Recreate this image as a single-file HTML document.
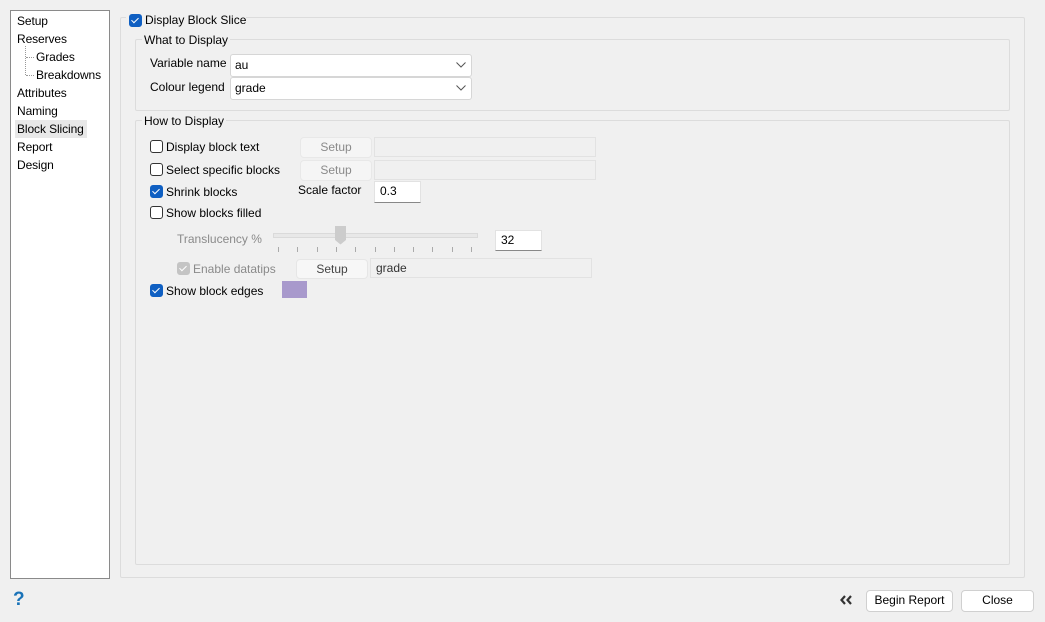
<!DOCTYPE html>
<html><head><style>
*{box-sizing:border-box;margin:0;padding:0}
body{width:1045px;height:622px;background:#f0f0f0;font-family:"Liberation Sans",sans-serif;font-size:12px;color:#000;position:relative;overflow:hidden}
.a{position:absolute;white-space:nowrap}
.grp{position:absolute;border:1px solid #dcdcdc;border-radius:2px}
.lbl{position:absolute;background:#f0f0f0;padding:0 2px;line-height:14px}
.cb{position:absolute;width:13px;height:13px;border:1px solid #333;border-radius:3px;background:#fff}
.cb.on{background:#0f5fc2;border-color:#0f5fc2}
.cb.on:after{content:"";position:absolute;left:3px;top:1px;width:3px;height:6px;border:solid #fff;border-width:0 1.3px 1.3px 0;transform:rotate(45deg)}
.btn{position:absolute;border:1px solid #d0d0d0;border-radius:4px;background:#fff;text-align:center;line-height:19px}
.btn.dis{background:#f5f5f5;border-color:#e8e8e8;color:#8a8a8a}
.fld{position:absolute;border:1px solid #e2e2e2;background:#f0f0f0}
.inp{position:absolute;background:#fff;border:1px solid #e2e2e2;border-bottom:1px solid #888;padding-left:5px;line-height:19px}
.combo{position:absolute;background:#fff;border:1px solid #d6d6d6;border-radius:3px;padding-left:4px;line-height:20px}
.combo svg{position:absolute;right:5px;top:7px}
</style></head><body>
<div class="a" style="left:10px;top:10px;width:100px;height:569px;background:#fff;border:1px solid #8a8a8a"></div>
<div class="a" style="left:15px;top:120px;width:72px;height:18px;background:#e8e8e8"></div>
<div class="a" style="left:17px;top:12px;line-height:18px;letter-spacing:-0.1px">Setup<br>Reserves<br><span style="padding-left:19px">Grades</span><br><span style="padding-left:19px">Breakdowns</span><br>Attributes<br>Naming<br>Block Slicing<br>Report<br>Design</div>
<div class="a" style="left:25px;top:46px;width:1px;height:29px;border-left:1px dotted #999"></div>
<div class="a" style="left:26px;top:57px;width:8px;border-top:1px dotted #999"></div>
<div class="a" style="left:26px;top:75px;width:8px;border-top:1px dotted #999"></div>

<div class="grp" style="left:120px;top:17px;width:905px;height:561px"></div>
<div class="lbl" style="left:126px;top:13px;width:120px;height:14px"></div>
<div class="cb on" style="left:129px;top:14px"></div>
<div class="a" style="left:145px;top:13px;line-height:14px">Display Block Slice</div>

<div class="grp" style="left:135px;top:39px;width:875px;height:72px"></div>
<div class="lbl" style="left:142px;top:33px">What to Display</div>
<div class="a" style="left:150px;top:56px">Variable name</div>
<div class="combo" style="left:230px;top:54px;width:242px;height:23px">au<svg width="10" height="6"><path d="M0.5 0.5L5 5L9.5 0.5" fill="none" stroke="#555"/></svg></div>
<div class="a" style="left:150px;top:80px">Colour legend</div>
<div class="combo" style="left:230px;top:77px;width:242px;height:23px">grade<svg width="10" height="6"><path d="M0.5 0.5L5 5L9.5 0.5" fill="none" stroke="#555"/></svg></div>

<div class="grp" style="left:135px;top:120px;width:875px;height:445px"></div>
<div class="lbl" style="left:142px;top:114px">How to Display</div>

<div class="cb" style="left:150px;top:140px"></div><div class="a" style="left:166px;top:140px">Display block text</div>
<div class="btn dis" style="left:300px;top:137px;width:72px;height:21px">Setup</div>
<div class="fld" style="left:374px;top:137px;width:222px;height:20px"></div>

<div class="cb" style="left:150px;top:163px"></div><div class="a" style="left:166px;top:163px">Select specific blocks</div>
<div class="btn dis" style="left:300px;top:160px;width:72px;height:21px">Setup</div>
<div class="fld" style="left:374px;top:160px;width:222px;height:20px"></div>

<div class="cb on" style="left:150px;top:185px"></div><div class="a" style="left:166px;top:185px">Shrink blocks</div>
<div class="a" style="left:298px;top:183px">Scale factor</div>
<div class="inp" style="left:374px;top:181px;width:47px;height:22px">0.3</div>

<div class="cb" style="left:150px;top:206px"></div><div class="a" style="left:166px;top:206px">Show blocks filled</div>

<div class="a" style="left:177px;top:232px;color:#8a8a8a">Translucency %</div>
<div class="a" style="left:273px;top:233px;width:205px;height:5px;border:1px solid #dadada;background:#e8e8e8"></div>
<svg class="a" style="left:335px;top:226px" width="12" height="19"><path d="M0 0H11V14L5.5 18.5L0 14Z" fill="#cccccc"/></svg>
<svg class="a" style="left:275px;top:247px" width="200" height="6"><g stroke="#aaa"><path d="M3.5 0v5M22.5 0v5M42.5 0v5M61.5 0v5M80.5 0v5M100.5 0v5M119.5 0v5M138.5 0v5M157.5 0v5M177.5 0v5M196.5 0v5"/></g></svg>
<div class="inp" style="left:495px;top:230px;width:47px;height:21px">32</div>

<div class="cb on" style="left:177px;top:262px;background:#c4c4c4;border-color:#c4c4c4"></div><div class="a" style="left:193px;top:262px;color:#8a8a8a">Enable datatips</div>
<div class="btn" style="left:296px;top:259px;width:72px;height:20px;background:#f7f7f7;border-color:#e6e6e6;color:#444">Setup</div>
<div class="fld" style="left:370px;top:258px;width:222px;height:20px;padding-left:5px;line-height:18px;color:#333">grade</div>

<div class="cb on" style="left:150px;top:284px"></div><div class="a" style="left:166px;top:284px">Show block edges</div>
<div class="a" style="left:282px;top:281px;width:25px;height:17px;background:#a899cc"></div>

<div class="a" style="left:13px;top:589px;font-size:19px;font-weight:bold;color:#1a73b8">?</div>
<svg class="a" style="left:840px;top:595px" width="13" height="10"><path d="M5 1L1.5 5L5 9M11 1L7.5 5L11 9" fill="none" stroke="#333" stroke-width="2.2"/></svg>
<div class="btn" style="left:866px;top:590px;width:87px;height:22px">Begin Report</div>
<div class="btn" style="left:961px;top:590px;width:73px;height:22px">Close</div>
</body></html>
